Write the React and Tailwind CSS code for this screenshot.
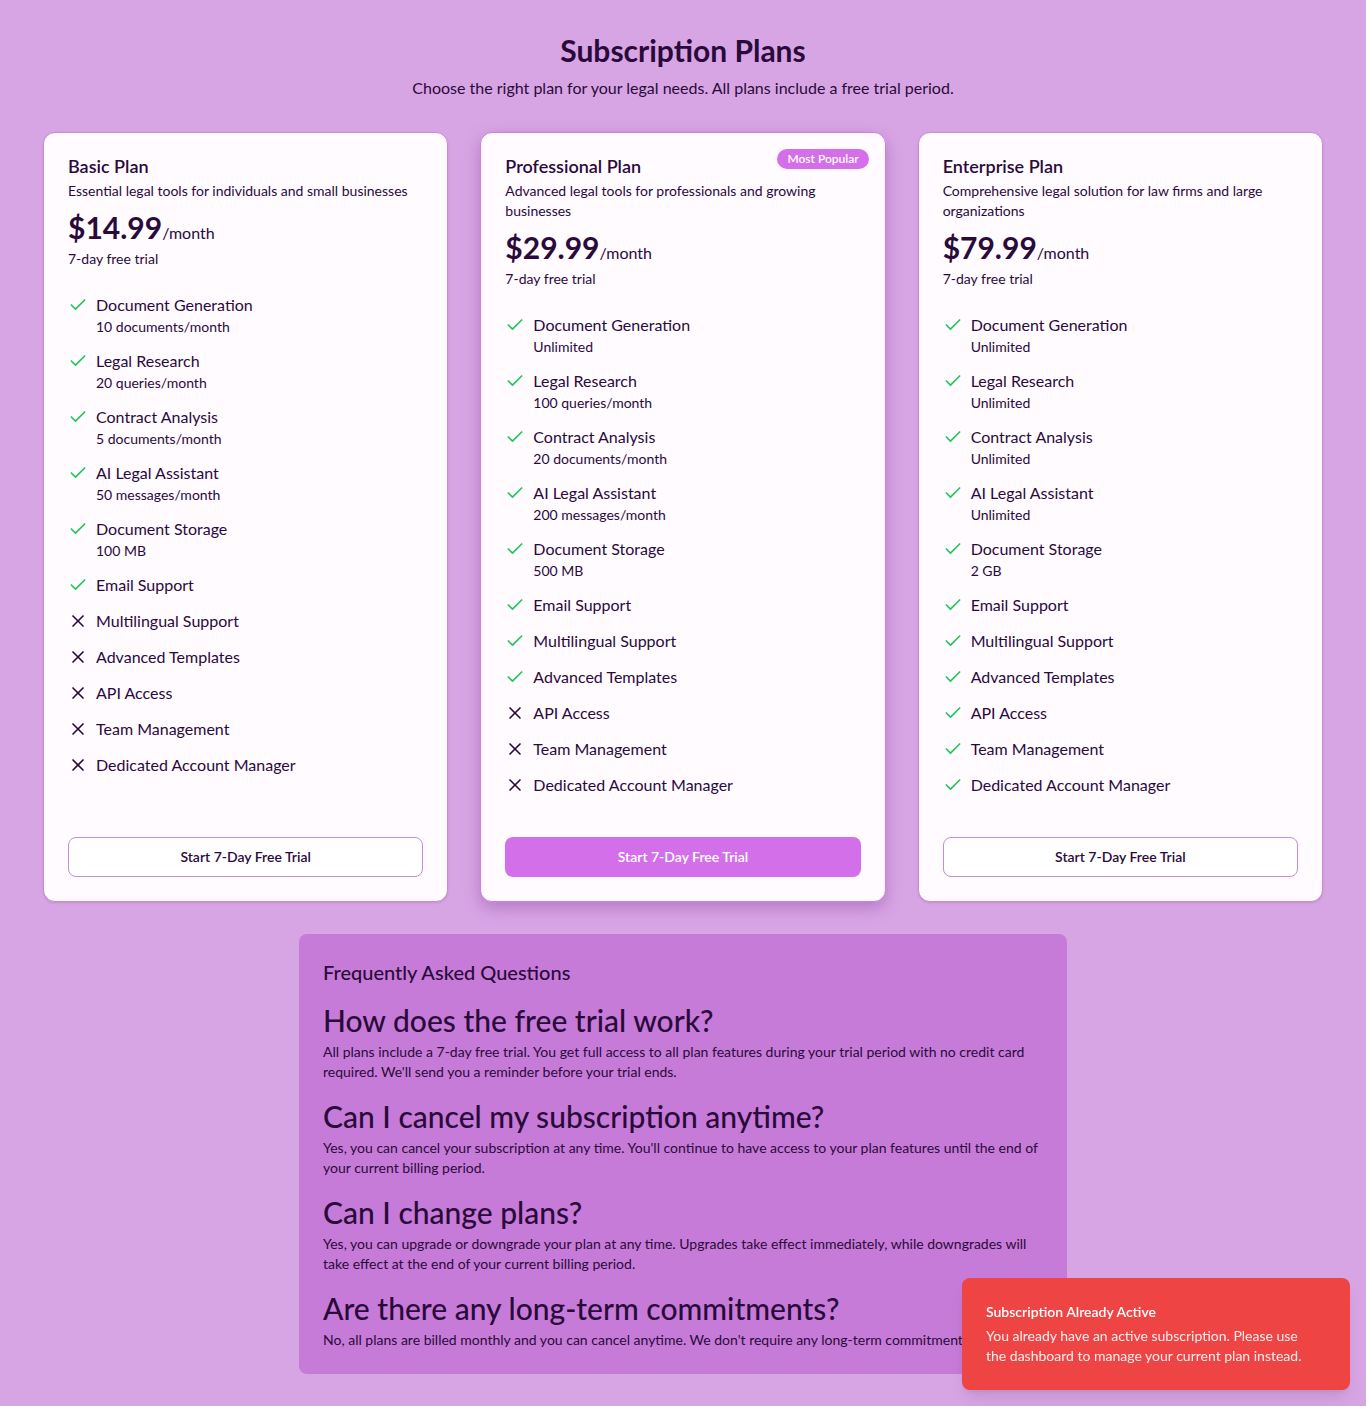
import { Check, X } from "lucide-react"

const plans = [
    {
        name: "Basic Plan",
        description: "Essential legal tools for individuals and small businesses",
        price: "$14.99",
        features: [
            { name: "Document Generation", detail: "10 documents/month", included: true },
            { name: "Legal Research", detail: "20 queries/month", included: true },
            { name: "Contract Analysis", detail: "5 documents/month", included: true },
            { name: "AI Legal Assistant", detail: "50 messages/month", included: true },
            { name: "Document Storage", detail: "100 MB", included: true },
            { name: "Email Support", included: true },
            { name: "Multilingual Support", included: false },
            { name: "Advanced Templates", included: false },
            { name: "API Access", included: false },
            { name: "Team Management", included: false },
            { name: "Dedicated Account Manager", included: false },
        ],
    },
    {
        name: "Professional Plan",
        description: "Advanced legal tools for professionals and growing businesses",
        price: "$29.99",
        popular: true,
        features: [
            { name: "Document Generation", detail: "Unlimited", included: true },
            { name: "Legal Research", detail: "100 queries/month", included: true },
            { name: "Contract Analysis", detail: "20 documents/month", included: true },
            { name: "AI Legal Assistant", detail: "200 messages/month", included: true },
            { name: "Document Storage", detail: "500 MB", included: true },
            { name: "Email Support", included: true },
            { name: "Multilingual Support", included: true },
            { name: "Advanced Templates", included: true },
            { name: "API Access", included: false },
            { name: "Team Management", included: false },
            { name: "Dedicated Account Manager", included: false },
        ],
    },
    {
        name: "Enterprise Plan",
        description: "Comprehensive legal solution for law firms and large organizations",
        price: "$79.99",
        features: [
            { name: "Document Generation", detail: "Unlimited", included: true },
            { name: "Legal Research", detail: "Unlimited", included: true },
            { name: "Contract Analysis", detail: "Unlimited", included: true },
            { name: "AI Legal Assistant", detail: "Unlimited", included: true },
            { name: "Document Storage", detail: "2 GB", included: true },
            { name: "Email Support", included: true },
            { name: "Multilingual Support", included: true },
            { name: "Advanced Templates", included: true },
            { name: "API Access", included: true },
            { name: "Team Management", included: true },
            { name: "Dedicated Account Manager", included: true },
        ],
    },
]

const faqs = [
    {
        q: "How does the free trial work?",
        a: "All plans include a 7-day free trial. You get full access to all plan features during your trial period with no credit card required. We'll send you a reminder before your trial ends.",
    },
    {
        q: "Can I cancel my subscription anytime?",
        a: "Yes, you can cancel your subscription at any time. You'll continue to have access to your plan features until the end of your current billing period.",
    },
    {
        q: "Can I change plans?",
        a: "Yes, you can upgrade or downgrade your plan at any time. Upgrades take effect immediately, while downgrades will take effect at the end of your current billing period.",
    },
    {
        q: "Are there any long-term commitments?",
        a: "No, all plans are billed monthly and you can cancel anytime. We don't require any long-term commitments.",
    },
]

const PlanCard = ({ plan }) => {
    return (
        <div
            className={
                plan.popular
                    ? "relative flex flex-col rounded-xl border border-[#d17be6] bg-[#fffbff] p-6 shadow-[0_6px_16px_rgba(120,40,140,0.35)]"
                    : "relative flex flex-col rounded-xl border border-[#c98ad8] bg-[#fffbff] p-6 shadow-sm"
            }
        >
            {plan.popular && (
                <span className="absolute right-4 top-4 rounded-full bg-[#d56ee9] px-2.5 py-0.5 text-xs font-semibold text-white">
                    Most Popular
                </span>
            )}
            <h3 className="text-lg font-semibold leading-none">{plan.name}</h3>
            <p className="mt-1.5 text-sm leading-5">{plan.description}</p>
            <div className="mt-2 flex items-baseline">
                <span className="text-3xl font-bold leading-9">{plan.price}</span>
                <span className="text-base">/month</span>
            </div>
            <p className="mt-1 text-sm leading-5">7-day free trial</p>
            <ul className="mt-6 flex flex-1 flex-col gap-3">
                {plan.features.map((f) => (
                    <li key={f.name} className="flex items-start gap-2">
                        {f.included ? (
                            <Check className="mt-0.5 h-5 w-5 shrink-0 text-[#22c55e]" strokeWidth={2} />
                        ) : (
                            <X className="mt-0.5 h-5 w-5 shrink-0 text-[#2a0a3b]" strokeWidth={2} />
                        )}
                        <div>
                            <div className="text-base leading-6">{f.name}</div>
                            {f.detail && <div className="text-sm leading-5">{f.detail}</div>}
                        </div>
                    </li>
                ))}
            </ul>
            <div className="pt-10">
                {plan.popular ? (
                    <button className="h-10 w-full rounded-lg bg-[#d36fe9] text-sm font-semibold text-white">
                        Start 7-Day Free Trial
                    </button>
                ) : (
                    <button className="h-10 w-full rounded-lg border border-[#c98ad8] bg-white text-sm font-semibold">
                        Start 7-Day Free Trial
                    </button>
                )}
            </div>
        </div>
    )
}

const App = () => {
    return (
        <div
            className="min-h-screen bg-[#d8a5e4] pb-8 text-[#2a0a3b]"
            style={{ fontFamily: "Lato, 'Open Sans', sans-serif" }}
        >
            <div className="mx-auto max-w-7xl py-8">
                <h1 className="text-center text-3xl font-bold leading-9">Subscription Plans</h1>
                <p className="mt-2 text-center text-base leading-6">
                    Choose the right plan for your legal needs. All plans include a free trial period.
                </p>
                <div className="mt-8 grid grid-cols-3 gap-8">
                    {plans.map((plan) => (
                        <PlanCard key={plan.name} plan={plan} />
                    ))}
                </div>
                <div className="mx-auto mt-8 max-w-3xl rounded-lg bg-[#c77bd8] p-6">
                    <h2 className="text-xl font-medium leading-7">Frequently Asked Questions</h2>
                    <div className="mt-4 flex flex-col gap-4">
                        {faqs.map((f) => (
                            <div key={f.q}>
                                <h3 className="text-3xl font-medium leading-9">{f.q}</h3>
                                <p className="mt-1 text-sm leading-5">{f.a}</p>
                            </div>
                        ))}
                    </div>
                </div>
            </div>
            <div className="fixed bottom-4 right-4 w-[388px] rounded-lg bg-[#ef4444] p-6 pr-8 text-white shadow-lg">
                <div className="text-sm font-semibold leading-5">Subscription Already Active</div>
                <div className="mt-1 text-sm leading-5 text-white/90">
                    You already have an active subscription. Please use the dashboard to manage your current plan instead.
                </div>
            </div>
        </div>
    )
}

export default App
